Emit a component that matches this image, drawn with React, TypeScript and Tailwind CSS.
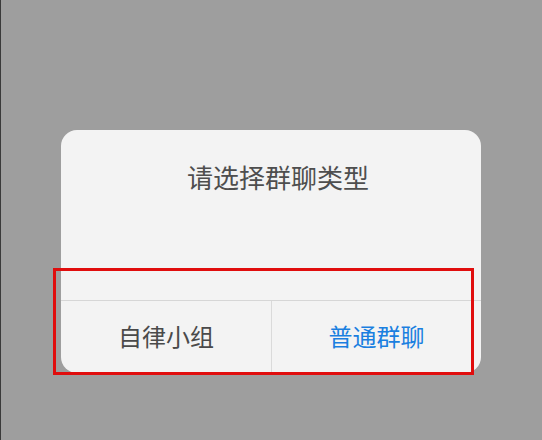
import React from "react";

export default function App() {
  return (
    <div
      className="relative h-[440px] w-[542px] overflow-hidden bg-[#9e9e9e]"
      style={{ fontFamily: '"Noto Sans CJK SC", "Noto Sans", sans-serif' }}
    >
      <div className="flex h-full w-full border-l border-l-[#3a3a3a] pl-[60px] pt-[130px]">
        <div className="flex h-[243px] w-[420px] flex-col overflow-hidden rounded-[16px] bg-[#f3f3f3]">
          <div className="flex h-[170px] justify-center pl-[14px] pt-[29px]">
            <span className="text-[26px] leading-[36px] text-[#4e4e4e]">请选择群聊类型</span>
          </div>
          <div className="flex flex-1 border-t border-[#d6d6d6]">
            <div className="flex w-[211px] items-center justify-center border-r border-[#dadada] pb-[2px]">
              <span className="text-[24px] leading-[32px] text-[#4a4a4a]">自律小组</span>
            </div>
            <div className="flex flex-1 items-center justify-center pb-[2px]">
              <span className="text-[24px] leading-[32px] text-[#1a7fe0]">普通群聊</span>
            </div>
          </div>
        </div>
      </div>
      <div className="pointer-events-none absolute left-[53px] top-[268px] h-[107px] w-[421px] border-[3px] border-[#e00d0d]" />
    </div>
  );
}
